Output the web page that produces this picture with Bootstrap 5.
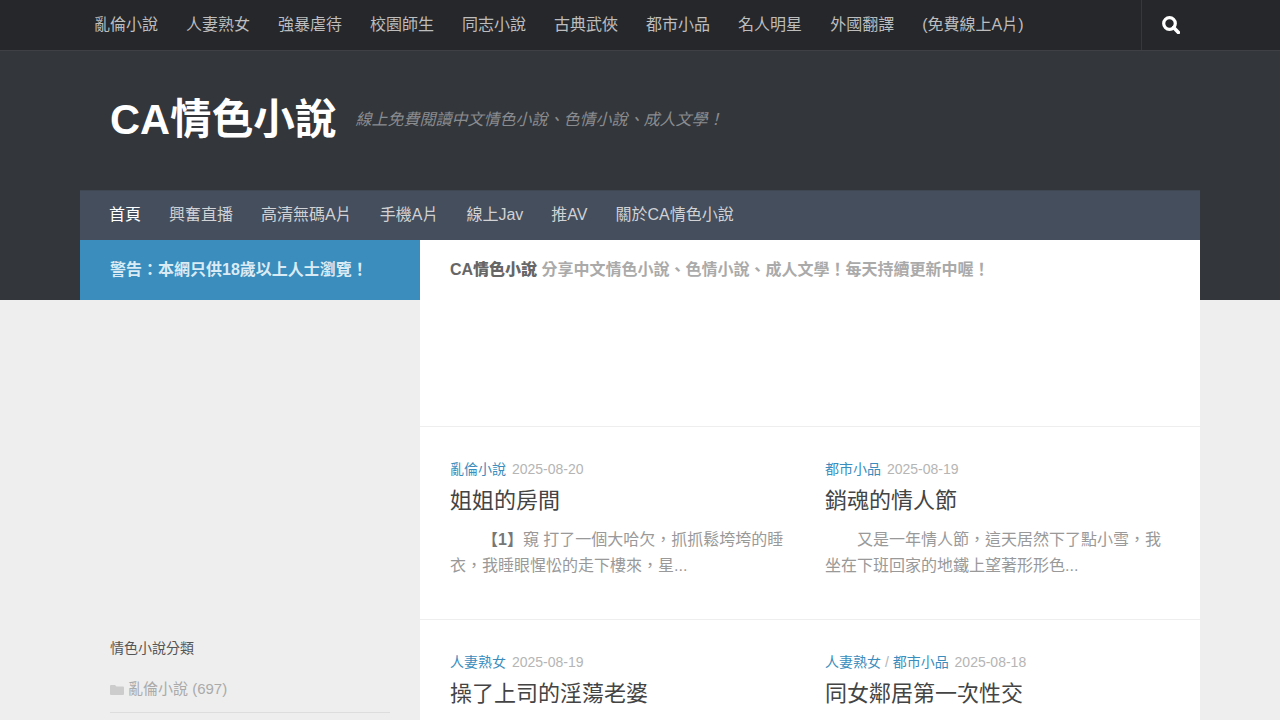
<!DOCTYPE html>
<html lang="zh-Hant">
<head>
<meta charset="utf-8">
<title>CA情色小說</title>
<link href="https://cdn.jsdelivr.net/npm/bootstrap@5.3.0/dist/css/bootstrap.min.css" rel="stylesheet">
<style>
html,body{height:100%}
body{font-family:"Liberation Sans","Noto Sans CJK TC",sans-serif;background:#eee;color:#666;font-size:16px;overflow-x:hidden}
.hd-wrap{background:#33363b;height:300px}
.top-bar{background:#26272b;height:51px;border-bottom:1px solid #3e4045}
.top-inner{width:1120px;margin:0 auto;height:50px}
.top-link{color:#bdbdbd;font-size:16px;padding:0 14px;line-height:48px;text-decoration:none;white-space:nowrap}
.top-search{margin-left:auto;width:59px;border-left:1px solid #37383d;padding-left:20px;margin-right:0}
.brand-row{width:1120px;margin:0 auto;height:139px;padding:0 30px 2px}
.brand-name{font-size:41.6px;font-weight:700;color:#fff;line-height:1;margin:0}
.brand-tag{font-size:16px;font-style:italic;color:#8a8c8f;margin-left:19px}
.sub-bar{width:1120px;margin:0 auto;height:50px;background:#454e5c;padding:0 0 2px 15px;border-top:1px solid #3f4753}
.sub-link{color:#d0d2d5;font-size:16px;padding:0 14px;line-height:45px;text-decoration:none;white-space:nowrap}
.sub-link.on{color:#fff}
.page-wrap{width:1120px;margin:-60px auto 0}
.side-col{width:340px;flex:none}
.warn-box{background:#3b8dbd;color:#d9ebf5;height:60px;line-height:60px;padding-left:30px;font-weight:700;font-size:16px}
.side-body{padding:338px 30px 0}
.side-title{font-size:14px;color:#555;line-height:20px;margin:0 0 20px;font-weight:400}
.cat-item{color:#aaa;font-size:15px;line-height:22px;padding-bottom:12px;border-bottom:1px solid #ddd}
.cat-item svg{margin-right:4px;vertical-align:-1px}
.main-col{width:780px;flex:none;background:#fff}
.intro-box{height:187px;padding:19px 30px 0;font-weight:700;font-size:16px;line-height:22px;color:#aaa;border-bottom:1px solid #eee}
.intro-box b{color:#666}
.post-row{border-bottom:1px solid #eee;height:193px;padding:30px 30px 0}
.post-cell{width:375px;flex:none;padding-right:30px}
.post-meta{font-size:14px;line-height:24px;color:#b5b5b5}
.post-meta a{color:#3b8dbd;text-decoration:none}
.meta-date{margin-left:2px}
.post-title{font-size:22px;font-weight:400;color:#444;line-height:30px;margin:5px 0 11px}
.post-text{font-size:16px;line-height:26px;color:#999;margin:0;text-spacing-trim:space-all}
.post-text b{font-weight:700;color:#777}
</style>
</head>
<body>
<header class="hd-wrap">
  <div class="top-bar">
    <nav class="top-inner d-flex align-items-center">
      <a class="top-link" href="#">亂倫小說</a>
      <a class="top-link" href="#">人妻熟女</a>
      <a class="top-link" href="#">強暴虐待</a>
      <a class="top-link" href="#">校園師生</a>
      <a class="top-link" href="#">同志小說</a>
      <a class="top-link" href="#">古典武俠</a>
      <a class="top-link" href="#">都市小品</a>
      <a class="top-link" href="#">名人明星</a>
      <a class="top-link" href="#">外國翻譯</a>
      <a class="top-link" href="#">(免費線上A片)</a>
      <div class="top-search h-100 d-flex align-items-center">
        <svg width="18" height="18" viewBox="0 0 18 18" aria-hidden="true"><circle cx="7.500" cy="7.500" r="5.800" fill="none" stroke="#fff" stroke-width="3.200"/><path d="M11.600 11.600l4.800 4.800" stroke="#fff" stroke-width="3.600" stroke-linecap="round"/></svg>
      </div>
    </nav>
  </div>
  <div class="brand-row d-flex align-items-center">
    <h1 class="brand-name">CA情色小說</h1>
    <span class="brand-tag">線上免費閱讀中文情色小說、色情小說、成人文學！</span>
  </div>
  <nav class="sub-bar d-flex align-items-center">
    <a class="sub-link on" href="#">首頁</a>
    <a class="sub-link" href="#">興奮直播</a>
    <a class="sub-link" href="#">高清無碼A片</a>
    <a class="sub-link" href="#">手機A片</a>
    <a class="sub-link" href="#">線上Jav</a>
    <a class="sub-link" href="#">推AV</a>
    <a class="sub-link" href="#">關於CA情色小說</a>
  </nav>
</header>
<div class="page-wrap d-flex">
  <aside class="side-col">
    <div class="warn-box">警告：本網只供18歲以上人士瀏覽！</div>
    <div class="side-body">
      <h3 class="side-title">情色小說分類</h3>
      <div class="cat-item"><svg width="14" height="11" viewBox="0 0 14 11" aria-hidden="true"><path d="M0 2a1 1 0 0 1 1-1h4l1.500 1.500H13a1 1 0 0 1 1 1V10a1 1 0 0 1-1 1H1a1 1 0 0 1-1-1z" fill="#ccc"/></svg>亂倫小說 (697)</div>
    </div>
  </aside>
  <main class="main-col">
    <div class="intro-box"><b>CA情色小說</b> 分享中文情色小說、色情小說、成人文學！每天持續更新中喔！</div>
    <div class="post-row d-flex">
      <article class="post-cell">
        <div class="post-meta"><a href="#">亂倫小說</a> <span class="meta-date">2025-08-20</span></div>
        <h2 class="post-title">姐姐的房間</h2>
        <p class="post-text">　　<b>【1】</b>窺 打了一個大哈欠，抓抓鬆垮垮的睡衣，我睡眼惺忪的走下樓來，星...</p>
      </article>
      <article class="post-cell">
        <div class="post-meta"><a href="#">都市小品</a> <span class="meta-date">2025-08-19</span></div>
        <h2 class="post-title">銷魂的情人節</h2>
        <p class="post-text">　　又是一年情人節，這天居然下了點小雪，我坐在下班回家的地鐵上望著形形色...</p>
      </article>
    </div>
    <div class="post-row d-flex">
      <article class="post-cell">
        <div class="post-meta"><a href="#">人妻熟女</a> <span class="meta-date">2025-08-19</span></div>
        <h2 class="post-title">操了上司的淫蕩老婆</h2>
      </article>
      <article class="post-cell">
        <div class="post-meta"><a href="#">人妻熟女</a> / <a href="#">都市小品</a> <span class="meta-date">2025-08-18</span></div>
        <h2 class="post-title">同女鄰居第一次性交</h2>
      </article>
    </div>
  </main>
</div>
<script src="https://cdn.jsdelivr.net/npm/bootstrap@5.3.0/dist/js/bootstrap.bundle.min.js"></script>
</body>
</html>
